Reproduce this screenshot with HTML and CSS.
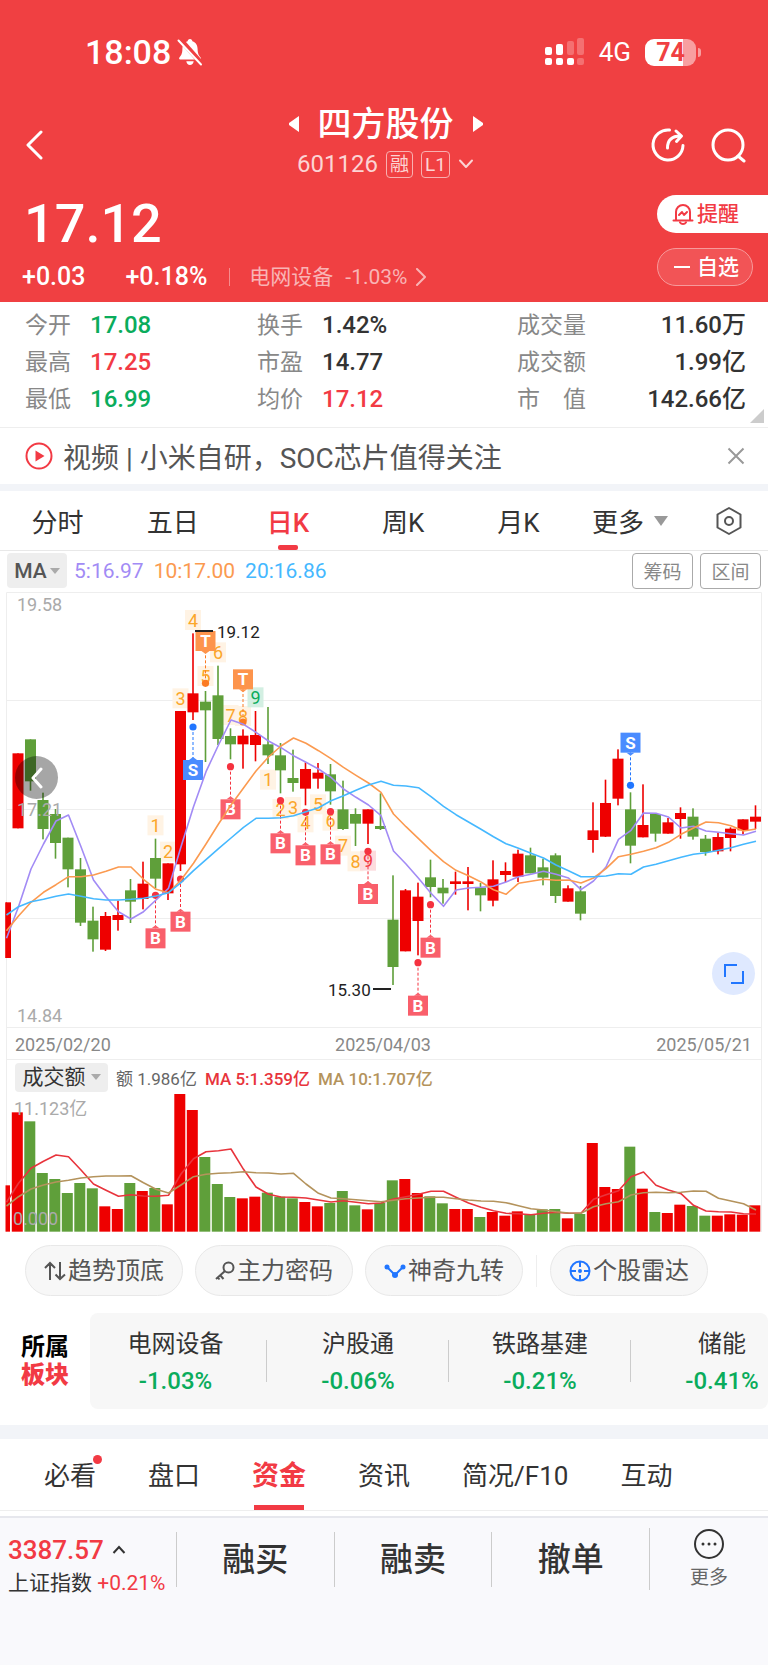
FILE: index.html
```html
<!DOCTYPE html>
<html lang="zh-Hans">
<head>
<meta charset="UTF-8" />
<meta name="viewport" content="width=device-width, initial-scale=1" />
<title>四方股份 601126</title>
<link rel="stylesheet" href="styles.css">
</head>
<body>

<header class="top">
  <div class="status">
    <span class="clock">18:08</span>
    <svg width="26" height="28" viewBox="0 0 26 28">
      <path d="M13 1c1.5 0 2.3 1 2.4 2.3C19 4.5 20.5 7.5 20.6 11c.1 5 1.4 6.5 3 8.5.6.8.3 1.9-.7 1.9H3.1c-1 0-1.3-1.1-.7-1.9 1.6-2 2.9-3.5 3-8.5.1-3.5 1.6-6.5 5.2-7.7C10.7 2 11.5 1 13 1zM9.3 23.2h7.4c-.3 2.3-1.8 3.8-3.7 3.8s-3.4-1.5-3.7-3.8z" fill="#fff"/>
      <path d="M3 1l22 25" stroke="#f04042" stroke-width="5"/>
      <path d="M1.5 2.5l22.5 24" stroke="#fff" stroke-width="2" stroke-linecap="round"/>
    </svg>
    <svg class="signal" width="40" height="28" viewBox="0 0 40 28" fill="#fff">
      <rect x="0" y="9" width="7" height="8" rx="2"/><rect x="11" y="6" width="7" height="11" rx="2"/>
      <rect x="22" y="3" width="7" height="14" rx="2" opacity=".25"/><rect x="32" y="0" width="7" height="17" rx="2" opacity=".25"/>
      <rect x="0" y="20" width="7" height="7" rx="2"/><rect x="11" y="20" width="7" height="7" rx="2"/>
      <rect x="22" y="20" width="7" height="7" rx="2"/><rect x="32" y="20" width="7" height="7" rx="2" opacity=".25"/>
    </svg>
    <span class="net">4G</span>
    <span class="battery">74</span>
  </div>

  <div class="nav">
    <button class="back" aria-label="返回"><svg width="18" height="30" viewBox="0 0 18 30"><path d="M16 2L3 15l13 13" class="line" stroke-width="3"/></svg></button>
    <div class="stock">
      <div class="stock-name">
        <svg width="12" height="16" viewBox="0 0 12 16"><path d="M11 0v16L1 9V7z" fill="#fff"/></svg>
        <h1>四方股份</h1>
        <svg width="12" height="16" viewBox="0 0 12 16"><path d="M1 0v16l10-7V7z" fill="#fff"/></svg>
      </div>
      <div class="stock-code">
        <span>601126</span><span class="badge">融</span><span class="badge">L1</span>
        <svg width="16" height="10" viewBox="0 0 16 10"><path d="M2 1.5l6 6.500 6-6.500" class="line" stroke-width="2"/></svg>
      </div>
    </div>
    <div class="nav-right">
      <button aria-label="分享"><svg width="36" height="36" viewBox="0 0 36 36"><g class="line" stroke-width="3"><path d="M19.5 3A15 15 0 1 0 33 18.5"/><path d="M17.5 21c0-8 4-12 13-12M26 4l5.500 5-5 5.500"/></g></svg></button>
      <button aria-label="搜索"><svg width="36" height="36" viewBox="0 0 36 36"><g class="line" stroke-width="3"><circle cx="18" cy="18" r="15"/><path d="M28 29l6 5"/></g></svg></button>
    </div>
  </div>

  <div class="quote">
    <div class="quote-main">
      <div class="price">17.12</div>
      <div class="change">
        <span>+0.03</span><span class="pct">+0.18%</span>
        <a href="#" class="industry">电网设备<span>-1.03%</span>
          <svg width="12" height="18" viewBox="0 0 12 18"><path d="M2 1l8 8-8 8" class="line" stroke-width="2"/></svg></a>
      </div>
    </div>
    <div class="quote-actions">
      <button class="remind"><svg width="22" height="22" viewBox="0 0 22 22" fill="none" stroke="#f23a44" stroke-width="2" stroke-linejoin="round" stroke-linecap="round"><path d="M4 17V9a7 7 0 0 1 14 0v8M1.5 17.5h19M8 19.5c1.5 2 4.5 2 6 0M7 12l3-3 2 3 3-3"/></svg>提醒</button>
      <button class="watch"><svg width="18" height="4" viewBox="0 0 18 4"><path d="M1 2h16" stroke="#fff" stroke-width="2"/></svg>自选</button>
    </div>
  </div>
</header>

<section class="stats">
  <dl>
    <div><dt>今开</dt><dd class="down">17.08</dd></div>
    <div><dt>最高</dt><dd class="up">17.25</dd></div>
    <div><dt>最低</dt><dd class="down">16.99</dd></div>
  </dl>
  <dl>
    <div><dt>换手</dt><dd>1.42%</dd></div>
    <div><dt>市盈</dt><dd>14.77</dd></div>
    <div><dt>均价</dt><dd class="up">17.12</dd></div>
  </dl>
  <dl class="wide">
    <div><dt>成交量</dt><dd>11.60万</dd></div>
    <div><dt>成交额</dt><dd>1.99亿</dd></div>
    <div><dt>市　值</dt><dd>142.66亿</dd></div>
  </dl>
</section>

<div class="news">
  <svg width="28" height="28" viewBox="0 0 28 28"><circle cx="14" cy="14" r="12.5" fill="none" stroke="#f23a44" stroke-width="2"/><path d="M10.5 8.5v11l9-5.5z" fill="#f23a44"/></svg>
  <a href="#">视频 | 小米自研，SOC芯片值得关注</a>
  <button aria-label="关闭"><svg width="18" height="18" viewBox="0 0 18 18"><path d="M1.5 1.5l15 15M16.5 1.5l-15 15" stroke="#999" stroke-width="2"/></svg></button>
</div>

<nav class="periods">
  <button>分时</button>
  <button>五日</button>
  <button class="active">日K</button>
  <button>周K</button>
  <button>月K</button>
  <button class="more">更多<svg width="14" height="10" viewBox="0 0 14 10"><path d="M0 0h14L7 10z" fill="#999"/></svg></button>
  <button class="gear" aria-label="设置"><svg width="28" height="30" viewBox="0 0 28 30" fill="none" stroke="#555" stroke-width="2"><path d="M14 2l11.5 6.5v13L14 28 2.5 21.5v-13z" stroke-linejoin="round"/><circle cx="14" cy="15" r="4"/></svg></button>
</nav>

<div class="ma">
  <button class="drop ma-drop">MA<i class="tri"></i></button>
  <span class="ma5">5:16.97</span>
  <span class="ma10">10:17.00</span>
  <span class="ma20">20:16.86</span>
  <button class="tool first">筹码</button>
  <button class="tool">区间</button>
</div>

<div class="kline">
  <svg id="kline" viewBox="0 0 768 470" role="img" aria-label="日K线"></svg>
  <button class="round prev" aria-label="向前"><svg width="12" height="22" viewBox="0 0 12 22"><path d="M10 2l-8 9 8 9" class="line" stroke-width="3"/></svg></button>
  <button class="round expand" aria-label="全屏"><svg width="22" height="22" viewBox="0 0 22 22"><path d="M2 14V2h12M20 8v12H8" fill="none" stroke="#2176ff" stroke-width="2"/></svg></button>
</div>

<div class="vol-head">
  <button class="drop vol-drop">成交额<i class="tri"></i></button>
  <span>额 1.986亿</span>
  <span class="vma5">MA 5:1.359亿</span>
  <span class="vma10">MA 10:1.707亿</span>
</div>
<svg id="volume" class="volume" viewBox="0 0 768 138" role="img" aria-label="成交额"></svg>

<div class="pills">
  <button><svg width="22" height="20" viewBox="0 0 22 20" fill="none" stroke="#555" stroke-width="2"><path d="M6 19V2M1 7l5-5 5 5M16 1v17M11.5 13.5L16 18l5-4.5"/></svg>趋势顶底</button>
  <button><svg width="20" height="20" viewBox="0 0 20 20" fill="none" stroke="#555" stroke-width="2"><circle cx="13.5" cy="6.5" r="5"/><path d="M10 10l-9 8M5 14l3.5 4M2.5 16l2 2.5"/></svg>主力密码</button>
  <button><svg width="22" height="16" viewBox="0 0 22 16"><path d="M3 4l8 8 8-8" fill="none" stroke="#2176ff" stroke-width="2"/><g fill="#2176ff"><circle cx="3" cy="4" r="2.5"/><circle cx="11" cy="12" r="3"/><circle cx="19" cy="4" r="2.5"/></g></svg>神奇九转</button>
  <span class="sep"></span>
  <button><svg width="22" height="22" viewBox="0 0 22 22" fill="none" stroke="#2176ff" stroke-width="2"><circle cx="11" cy="11" r="9.5"/><path d="M11 1v6M11 15v6M1 11h6M15 11h6"/><circle cx="11" cy="11" r="1"/></svg>个股雷达</button>
</div>

<section class="sectors">
  <h2>所属<b>板块</b></h2>
  <div class="sector-list">
    <a href="#">电网设备<span>-1.03%</span></a>
    <a href="#">沪股通<span>-0.06%</span></a>
    <a href="#">铁路基建<span>-0.21%</span></a>
    <a href="#">储能<span>-0.41%</span></a>
  </div>
</section>

<nav class="tabs">
  <a href="#" class="dot">必看</a>
  <a href="#">盘口</a>
  <a href="#" class="active">资金</a>
  <a href="#">资讯</a>
  <a href="#">简况/F10</a>
  <a href="#">互动</a>
</nav>

<footer class="bar">
  <a href="#" class="index">
    <span class="index-num">3387.57<svg width="14" height="10" viewBox="0 0 14 10"><path d="M1.5 8L7 2l5.5 6" fill="none" stroke="#333" stroke-width="2"/></svg></span>
    <span class="index-name">上证指数 <em>+0.21%</em></span>
  </a>
  <button>融买</button>
  <button>融卖</button>
  <button>撤单</button>
  <button class="bar-more">
    <svg width="32" height="32" viewBox="0 0 32 32"><circle cx="16" cy="16" r="14" fill="none" stroke="#333" stroke-width="2"/><g fill="#333"><circle cx="10" cy="16" r="1.5"/><circle cx="16" cy="16" r="1.5"/><circle cx="22" cy="16" r="1.5"/></g></svg>
    更多
  </button>
</footer>

<script src="chart.js"></script>
</body>
</html>
```
FILE: styles.css
```css
* { box-sizing: border-box; }
body {
  margin: 0;
  min-height: 100vh;
  display: flex;
  flex-direction: column;
  background: #fff;
  color: #333;
  font-family: Roboto, "Noto Sans CJK SC", sans-serif;
}
button { font: inherit; color: inherit; background: none; border: 0; padding: 0; cursor: pointer; }
a { color: inherit; text-decoration: none; }
svg { display: block; flex: none; }
.line { fill: none; stroke: currentColor; stroke-linecap: round; stroke-linejoin: round; }
.up { color: #f23a44; }
.down { color: #0aac5c; }

/* header */
.top { background: #f04042; color: #fff; height: 302px; }
.status { display: flex; align-items: center; height: 104px; padding: 0 72px 0 85px; }
.clock { font-size: 34px; font-weight: 500; margin-right: 6px; }
.signal { margin-left: auto; }
.net { font-size: 26px; margin: 0 14px; }
.battery {
  position: relative;
  width: 51px;
  height: 27px;
  border-radius: 9px;
  background: linear-gradient(90deg, #fff 75%, #f89fa0 75%);
  color: #f04042;
  font-size: 25px;
  font-weight: 700;
  line-height: 28px;
  text-align: center;
}
.battery::after {
  content: "";
  position: absolute;
  right: -5px;
  top: 9px;
  width: 3px;
  height: 9px;
  border-radius: 0 3px 3px 0;
  background: #f89fa0;
}
.nav { display: grid; grid-template-columns: 1fr auto 1fr; align-items: center; height: 82px; padding: 0 22px 0 25px; }
.back { justify-self: start; }
.nav-right { display: flex; gap: 24px; justify-content: flex-end; }
.stock { display: flex; flex-direction: column; align-items: center; }
.stock-name { display: flex; align-items: center; gap: 18px; }
.stock-name h1 { margin: 0; font-size: 34px; line-height: 38px; font-weight: 500; }
.stock-code { display: flex; align-items: center; gap: 8px; font-size: 24px; line-height: 42px; color: #fcd4d4; }
.badge { height: 27px; min-width: 27px; padding: 0 3px; border: 1px solid #f9b0b0; border-radius: 4px; font-size: 19px; line-height: 25px; text-align: center; }
.quote { display: flex; justify-content: space-between; }
.quote-main { padding: 8px 0 0 22px; }
.price { font-size: 54px; line-height: 60px; font-weight: 500; padding-left: 2px; }
.change { display: flex; align-items: center; font-size: 25px; font-weight: 500; line-height: 46px; }
.pct { margin-left: 40px; }
.industry { display: flex; align-items: center; margin-left: 22px; color: #f9b4b5; font-size: 21px; font-weight: 400; }
.industry::before { content: ""; width: 1px; height: 18px; margin-right: 19px; background: #f68c8d; }
.industry span { margin: 0 8px 0 12px; }
.quote-actions { display: flex; flex-direction: column; align-items: flex-end; gap: 15px; padding-top: 9px; }
.quote-actions button { display: flex; align-items: center; font-size: 21px; line-height: 36px; font-weight: 500; height: 38px; padding-left: 15px; }
.remind { width: 111px; gap: 3px; background: #fff; color: #f23a44; border-radius: 19px 0 0 19px; }
.watch { width: 96px; gap: 6px; margin-right: 15px; border: 1px solid #f79a9b; border-radius: 19px; background: #f25456; }
.quote-actions .remind { color: #f23a44; }

/* key figures */
.stats { position: relative; display: flex; height: 126px; padding: 5px 22px 0 25px; border-bottom: 1px solid #eee; }
.stats::after { content: ""; position: absolute; right: 4px; bottom: 4px; border: 7px solid #ccc; border-top-color: transparent; border-left-color: transparent; }
.stats dl { flex: 232; margin: 0; }
.stats dl + dl { flex: 260; }
.stats dl.wide { flex: 229; }
.stats dl div { display: flex; align-items: baseline; height: 37px; line-height: 37px; }
.stats dt { width: 65px; font-size: 23px; color: #888; white-space: nowrap; }
.stats dd { margin: 0; font-size: 24px; font-weight: 500; }
.stats .wide dd { margin-left: auto; }

.news { display: flex; align-items: center; height: 56px; padding: 0 23px 0 25px; color: #555; font-size: 28px; }
.news a { flex: 1; margin-left: 10px; }

.periods { display: flex; align-items: stretch; height: 67px; border-top: 7px solid #f2f4f8; border-bottom: 1px solid #e8e8e8; font-size: 26px; }
.periods button { position: relative; width: 15%; }
.periods .active { color: #f23a44; font-weight: 500; }
.periods .active::after { content: ""; position: absolute; left: 50%; bottom: 0; width: 20px; height: 5px; margin-left: -10px; border-radius: 2px; background: #f23a44; }
.periods .more { display: flex; align-items: center; gap: 10px; width: auto; margin-left: 16px; }
.periods .gear { width: auto; margin: 0 25px 0 auto; }

/* chart */
.ma { display: flex; align-items: center; height: 39px; padding: 0 7px; gap: 10px; font-size: 21px; }
.drop { display: flex; align-items: center; justify-content: center; background: #eee; border-radius: 4px; }
.ma-drop { flex: none; width: 60px; height: 35px; margin-right: -3px; color: #555; font-weight: 500; gap: 3px; }
.tri { border: 5px solid transparent; border-top: 6px solid #aaa; border-bottom: 0; }
.ma5 { color: #a28bf5; }
.ma10 { color: #fb9a50; }
.ma20 { color: #45b8ff; }
.tool { width: 61px; height: 36px; border: 1px solid #aaa; border-radius: 4px; color: #888; font-size: 19px; margin-left: -3px; }
.tool.first { margin-left: auto; }
.kline { position: relative; }
.kline > svg, .volume { width: 100%; height: auto; }
.round { position: absolute; display: flex; align-items: center; justify-content: center; width: 43px; height: 43px; border-radius: 50%; }
.prev { left: 15px; top: 166px; background: rgba(0, 0, 0, .35); color: #fff; }
.expand { right: 13px; bottom: 65px; background: #dfe9ff; }
.vol-head { display: flex; align-items: center; height: 34px; margin: 0 6px; padding-left: 8px; gap: 8px; border: solid #eee; border-width: 0 1px; font-size: 17px; color: #666; }
.vol-drop { width: 93px; height: 29px; gap: 5px; font-size: 21px; line-height: 28px; color: #333; }
.vma5 { color: #e8343c; font-weight: 500; }
.vma10 { color: #b4935c; font-weight: 500; }
.grid { stroke: #eee; fill: none; }
.axis { fill: #aaa; font-size: 18px; }
.date { fill: #888; font-size: 18px; }
.peak { fill: #222; font-size: 17px; }
.count { font-size: 18px; text-anchor: middle; }
.sig { fill: #fff; font-size: 17px; font-weight: 700; text-anchor: middle; }

/* shortcuts and sectors */
.pills { display: flex; align-items: center; padding: 13px 0 0 25px; gap: 12px; }
.pills button { display: flex; align-items: center; justify-content: center; gap: 2px; width: 158px; height: 51px; border: 1px solid #e8e8e8; border-radius: 26px; background: #f7f7f7; color: #555; font-size: 24px; line-height: 46px; }
.sep { width: 1px; height: 32px; margin: 0 1px; background: #eee; }
.sectors { display: flex; align-items: center; padding: 17px 0 16px; }
.sectors h2 { flex: none; width: 90px; margin: 0; font-size: 24px; line-height: 28px; font-weight: 700; text-align: center; color: #000; }
.sectors b { display: block; color: #f23a44; }
.sector-list { flex: 1; display: flex; height: 96px; padding-top: 4px; align-items: center; overflow: hidden; border-radius: 8px; background: #f7f7f7; }
.sector-list a { position: relative; flex: none; width: 182px; text-align: center; font-size: 24px; line-height: 37px; }
.sector-list a:first-child { width: 177px; padding-right: 6px; }
.sector-list a:not(:last-child)::after { content: ""; position: absolute; right: 0; top: 14px; width: 1px; height: 42px; background: #ccc; }
.sector-list span { display: block; color: #0aac5c; font-weight: 500; }

.tabs { display: flex; gap: 52px; height: 86px; padding-left: 44px; border-top: 14px solid #f2f4f8; border-bottom: 1px solid #eee; font-size: 26px; line-height: 74px; }
.tabs a { position: relative; white-space: nowrap; }
.tabs .active { color: #f23a44; font-size: 27px; font-weight: 700; }
.tabs .active::after { content: ""; position: absolute; left: 2px; right: 2px; bottom: 0; height: 5px; background: #f23a44; }
.dot::after { content: ""; position: absolute; right: -6px; top: 16px; width: 9px; height: 9px; border-radius: 50%; background: #f23a44; }

.bar { flex: 1; display: flex; align-items: flex-start; margin-top: 5px; padding-top: 14px; border-top: 2px solid #e6e7ed; background: #f9f9fc; }
.index { flex: none; width: 176px; padding: 2px 0 0 8px; }
.index-num { display: flex; align-items: center; gap: 8px; font-size: 26px; font-weight: 500; line-height: 32px; color: #f23a44; }
.index-name { font-size: 21px; line-height: 34px; white-space: nowrap; }
.index em { font-style: normal; color: #f23a44; }
.bar button { flex: 158; height: 55px; border-left: 1px solid #ccc; font-size: 33px; line-height: 54px; font-weight: 500; }
.bar .bar-more { flex: 119; display: flex; flex-direction: column; align-items: center; justify-content: space-between; height: 62px; margin-top: -4px; font-size: 19px; line-height: 24px; font-weight: 400; color: #666; }
```
FILE: chart.js
```js
const STEP = 12.5;
const RED = '#ee0000';
const GREEN = '#5f9f3a';

// [r/g, body top, body bottom, high, low], three units to a pixel
const candles = [
  ['r', 937, 1104, 937, 1104], ['r', 490, 715, 490, 715], ['g', 448, 574, 448, 602], ['g', 630, 717, 608, 748],
  ['g', 672, 759, 657, 806], ['g', 743, 838, 743, 892], ['g', 838, 998, 804, 1008], ['g', 992, 1048, 950, 1085],
  ['r', 978, 1079, 966, 1083], ['r', 975, 990, 932, 1022], ['g', 901, 935, 867, 999], ['r', 881, 927, 815, 958],
  ['g', 804, 866, 746, 895], ['r', 820, 910, 820, 930], ['r', 363, 823, 363, 843], ['r', 310, 367, 130, 390],
  ['g', 335, 361, 303, 516], ['g', 316, 447, 227, 465], ['g', 438, 463, 415, 508], ['r', 437, 463, 418, 536],
  ['r', 435, 465, 363, 514], ['g', 463, 496, 351, 522], ['g', 496, 541, 459, 610], ['g', 564, 579, 479, 605],
  ['r', 537, 596, 517, 646], ['r', 548, 566, 519, 596], ['g', 553, 604, 522, 644], ['g', 658, 717, 572, 720],
  ['g', 672, 701, 655, 768], ['r', 658, 701, 658, 762], ['g', 708, 717, 610, 720], ['g', 989, 1131, 856, 1185],
  ['r', 901, 1084, 897, 1084], ['r', 920, 993, 878, 1096], ['g', 862, 891, 809, 922], ['g', 893, 910, 867, 941],
  ['r', 874, 882, 845, 914], ['r', 874, 882, 831, 961], ['g', 893, 916, 879, 964], ['r', 868, 932, 811, 949],
  ['r', 843, 855, 817, 876], ['r', 791, 860, 779, 876], ['g', 796, 850, 773, 850], ['g', 832, 863, 806, 886],
  ['g', 796, 918, 790, 939], ['r', 895, 935, 886, 935], ['g', 904, 971, 888, 991], ['r', 721, 750, 637, 788],
  ['r', 639, 740, 569, 741], ['r', 506, 626, 478, 646], ['g', 658, 767, 607, 820], ['r', 705, 742, 583, 742],
  ['g', 672, 731, 672, 755], ['r', 697, 731, 684, 731], ['r', 669, 687, 652, 746], ['g', 680, 740, 655, 749],
  ['g', 746, 786, 735, 797], ['r', 741, 784, 728, 793], ['r', 716, 744, 712, 784], ['r', 688, 721, 688, 733],
  ['r', 680, 695, 646, 717]
];
const ma5 = [1045, 950, 837, 762, 693, 675, 770, 870, 920, 965, 987, 965, 930, 895, 770, 650, 545, 465, 390, 403, 427, 453, 473, 497, 517, 537, 562, 597, 622, 645, 677, 783, 822, 865, 910, 949, 900, 894, 892, 889, 876, 860, 853, 844, 853, 864, 899, 873, 831, 748, 721, 669, 670, 681, 714, 709, 723, 727, 731, 735, 724];
const ma10 = [1022, 978, 937, 907, 884, 860, 860, 855, 844, 831, 831, 868, 898, 908, 870, 820, 762, 702, 645, 594, 543, 501, 468, 444, 460, 482, 506, 532, 556, 579, 607, 672, 710, 746, 782, 815, 841, 857, 876, 899, 913, 880, 874, 868, 871, 870, 879, 864, 836, 800, 793, 784, 773, 757, 733, 714, 696, 698, 707, 723, 717];
const ma20 = [975, 950, 935, 928, 919, 912, 919, 926, 930, 930, 928, 925, 918, 908, 878, 842, 809, 776, 744, 712, 685, 685, 683, 677, 665, 653, 632, 617, 601, 585, 574, 586, 588, 593, 620, 649, 674, 696, 718, 740, 761, 775, 790, 804, 825, 842, 860, 860, 858, 851, 853, 831, 823, 812, 802, 793, 788, 781, 773, 763, 754];

// [candle, y, number]
const counts = [
  [12, 706, 1], [13, 785, 2], [14, 325, 3], [15, 90, 4], [16, 258, 5], [17, 187, 6], [18, 375, 7], [19, 378, 8], [20, 322, 9, '#0aac5c', '#d3efe2'],
  [21, 569, 1], [22, 657, 2], [23, 651, 3], [24, 697, 4], [25, 643, 5], [26, 692, 6], [27, 767, 7], [28, 814, 8], [29, 812, 9, '#f23a44', '#fddcde']
];
// [candle, dot y, box y, letter]
const signals = [
  [12, 916, 1045, 'B'], [14, 867, 995, 'B'], [18, 530, 658, 'B'], [22, 632, 760, 'B'], [24, 667, 796, 'B'], [26, 665, 793, 'B'],
  [29, 784, 912, 'B'], [34, 944, 1073, 'B'], [33, 1118, 1247, 'B'], [15, 411, 540, 'S'], [50, 586, 458, 'S'], [16, 280, 153, 'T'], [19, 396, 268, 'T']
];
const signalColors = { B: ['#f95f6b', '#f5323f'], S: ['#4a8cff', '#2176ff'], T: ['#fd944c', '#fb7a22'] };

const volumes = [496, 277, 304, 459, 477, 519, 489, 505, 559, 567, 489, 513, 504, 553, 222, 270, 411, 492, 531, 535, 530, 518, 530, 535, 546, 559, 549, 513, 556, 568, 549, 481, 477, 519, 529, 550, 567, 567, 591, 576, 587, 574, 584, 568, 567, 595, 582, 369, 501, 507, 380, 506, 576, 579, 554, 558, 587, 587, 583, 584, 556];
const vma5 = [547, 490, 445, 424, 405, 410, 450, 492, 511, 529, 524, 528, 529, 526, 462, 416, 395, 392, 387, 448, 501, 523, 531, 532, 534, 540, 546, 542, 547, 551, 549, 537, 530, 523, 514, 514, 532, 549, 562, 572, 580, 581, 584, 580, 577, 580, 580, 538, 524, 512, 470, 456, 496, 510, 521, 556, 573, 575, 576, 581, 582];
const vma10 = [558, 530, 507, 495, 486, 481, 474, 470, 468, 468, 467, 488, 508, 519, 495, 470, 463, 460, 458, 455, 458, 459, 462, 460, 492, 520, 534, 536, 539, 542, 545, 541, 536, 534, 532, 532, 536, 540, 543, 544, 548, 557, 566, 570, 575, 579, 580, 560, 551, 545, 525, 518, 517, 518, 517, 513, 514, 535, 543, 551, 570];

const cx = i => i === 0 ? 6 : 5.5 + STEP * i;
const color = c => c === 'r' ? RED : GREEN;

function rect(x, y, w, h, fill) {
  return `<rect x="${x}" y="${y}" width="${w}" height="${h}" fill="${fill}"/>`;
}
function line(values, stroke, base) {
  const pts = values.map((v, i) => `${cx(i) + 0.5},${((v - base) / 3).toFixed(1)}`).join(' ');
  return `<polyline points="${pts}" fill="none" stroke="${stroke}" stroke-width="1.6" stroke-linejoin="round"/>`;
}
function text(x, y, cls, str, extra = '') {
  return `<text x="${x}" y="${y}" class="${cls}" ${extra}>${str}</text>`;
}

function drawKline() {
  let s = '<path class="grid" d="M6.5 470V2.5h755V470M6 110.5h755M6 219.5h755M6 328.5h755M6 437.5h755M6 469.5h755"/>';
  counts.forEach(([i, y, n, fg, bg]) => {
    s += rect(cx(i) - 8, y / 3 - 10, 16, 20, bg || '#fff3e4');
  });
  candles.forEach(([c, top, bottom, high, low], i) => {
    const x = cx(i);
    s += rect(x - 0.8, high / 3, 1.6, (low - high) / 3, color(c));
    s += i === 0 ? rect(6, top / 3, 5, (bottom - top) / 3, color(c))
                 : rect(x - 5.5, top / 3, 11, (bottom - top) / 3, color(c));
  });
  counts.forEach(([i, y, n, fg]) => {
    s += text(cx(i), y / 3 + 6.5, 'count', n, `fill="${fg || '#fba62a'}"`);
  });
  signals.forEach(([i, dot, box, letter]) => {
    const [bg, fg] = signalColors[letter];
    const x = cx(i), d = dot / 3, b = box / 3;
    const dir = b > d ? -1 : 1;
    s += `<path d="M${x} ${d}V${b}" stroke="${fg}" stroke-dasharray="3 2"/>`;
    s += `<circle cx="${x}" cy="${d}" r="3.6" fill="${fg}"/>`;
    s += rect(x - 10, b - 10, 20, 20, bg);
    s += `<path d="M${x - 4} ${b + 10 * dir}h8l-4 ${3 * dir}z" fill="${bg}"/>`;
    s += text(x, b + 6, 'sig', letter);
  });
  s += line(ma5, '#a28bf5', 0) + line(ma10, '#fb9a50', 0) + line(ma20, '#45b8ff', 0);
  s += '<path d="M195 41h18M373 399h18" stroke="#222" stroke-width="2"/>';
  s += text(217, 48, 'peak', '19.12') + text(328, 406, 'peak', '15.30');
  s += text(17, 21, 'axis', '19.58') + text(17, 226, 'axis', '17.21') + text(17, 432, 'axis', '14.84');
  s += text(15, 461, 'date', '2025/02/20') + text(383, 461, 'date', '2025/04/03', 'text-anchor="middle"') + text(752, 461, 'date', '2025/05/21', 'text-anchor="end"');
  document.getElementById('kline').innerHTML = s;
}

function drawVolume() {
  let s = '<path class="grid" d="M6.5 0V138M761.5 0V138"/>';
  volumes.forEach((v, i) => {
    const x = i === 0 ? 5.5 : cx(i) - 6.2;
    s += rect(x, (v - 222) / 3, i === 0 ? 4.5 : 11, (635 - v) / 3, color(candles[i][0]));
  });
  s += line(vma5, '#e8343c', 222) + line(vma10, '#b4935c', 222);
  s += text(14, 21, 'axis', '11.123亿') + text(13, 131, 'axis', '0.000');
  document.getElementById('volume').innerHTML = s;
}

drawKline();
drawVolume();
```
